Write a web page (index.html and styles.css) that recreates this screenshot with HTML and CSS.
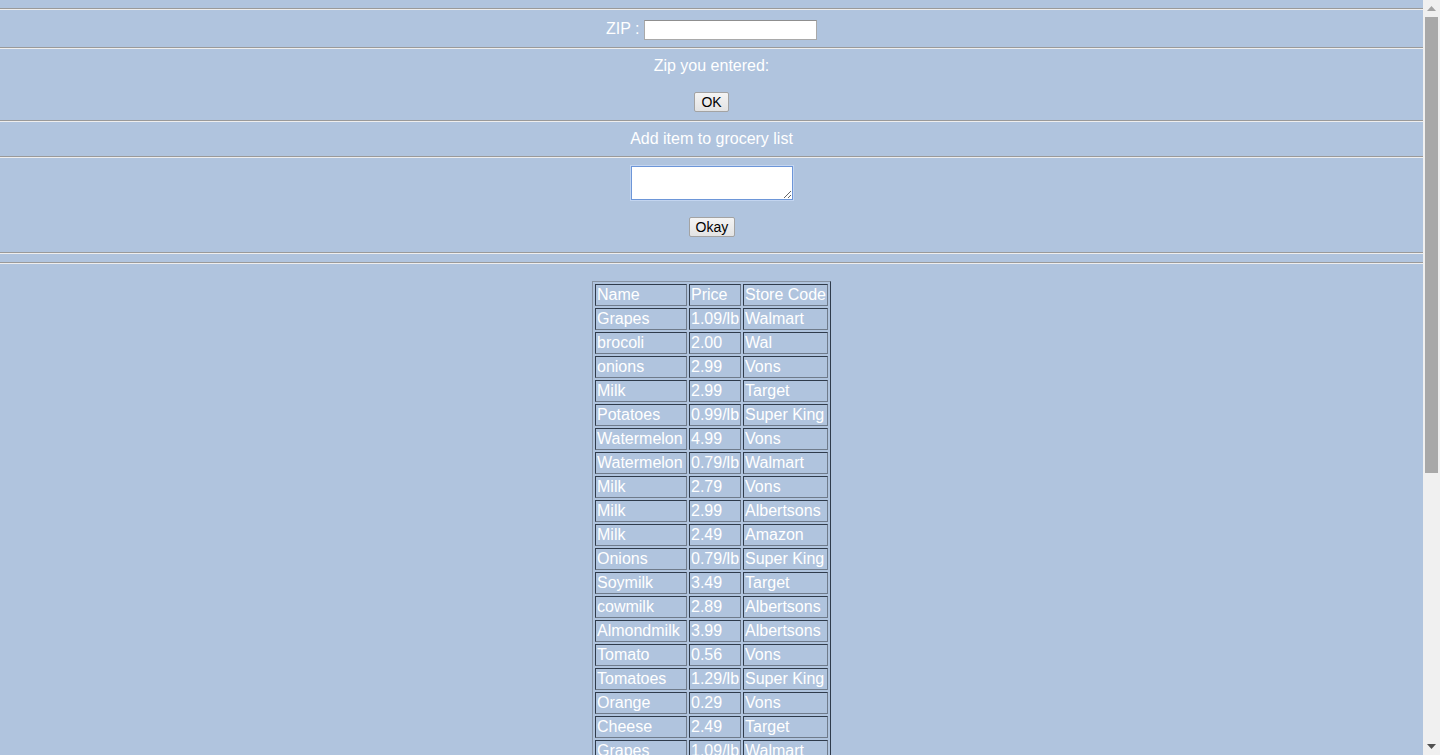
FILE: index.html
```html
<!DOCTYPE html>
<html>
<head>
<meta charset="utf-8">
<title>Grocery list</title>
<link rel="stylesheet" href="styles.css">
</head>
<body>
<div class="viewport">
  <div class="page">
    <hr class="rule">
    <div class="zip-row">ZIP : <input class="zip-input" type="text"></div>
    <hr class="rule">
    <div class="entered">
      <div class="label">Zip you entered:</div>
      <button class="btn btn-ok">OK</button>
    </div>
    <hr class="rule">
    <div class="add-title">Add item to grocery list</div>
    <hr class="rule">
    <div class="add-box">
      <textarea class="item-text"></textarea>
      <button class="btn btn-okay">Okay</button>
    </div>
    <hr class="rule">
    <div class="spacer"></div>
    <hr class="rule">
    <table class="grocery">
      <tr><td class="c-name">Name</td><td>Price</td><td>Store Code</td></tr>
      <tr><td>Grapes</td><td>1.09/lb</td><td>Walmart</td></tr>
      <tr><td>brocoli</td><td>2.00</td><td>Wal</td></tr>
      <tr><td>onions</td><td>2.99</td><td>Vons</td></tr>
      <tr><td>Milk</td><td>2.99</td><td>Target</td></tr>
      <tr><td>Potatoes</td><td>0.99/lb</td><td>Super King</td></tr>
      <tr><td>Watermelon</td><td>4.99</td><td>Vons</td></tr>
      <tr><td>Watermelon</td><td>0.79/lb</td><td>Walmart</td></tr>
      <tr><td>Milk</td><td>2.79</td><td>Vons</td></tr>
      <tr><td>Milk</td><td>2.99</td><td>Albertsons</td></tr>
      <tr><td>Milk</td><td>2.49</td><td>Amazon</td></tr>
      <tr><td>Onions</td><td>0.79/lb</td><td>Super King</td></tr>
      <tr><td>Soymilk</td><td>3.49</td><td>Target</td></tr>
      <tr><td>cowmilk</td><td>2.89</td><td>Albertsons</td></tr>
      <tr><td>Almondmilk</td><td>3.99</td><td>Albertsons</td></tr>
      <tr><td>Tomato</td><td>0.56</td><td>Vons</td></tr>
      <tr><td>Tomatoes</td><td>1.29/lb</td><td>Super King</td></tr>
      <tr><td>Orange</td><td>0.29</td><td>Vons</td></tr>
      <tr><td>Cheese</td><td>2.49</td><td>Target</td></tr>
      <tr><td>Grapes</td><td>1.09/lb</td><td>Walmart</td></tr>
    </table>
  </div>
  <div class="scrollbar">
    <div class="sb-arrow">
      <svg width="9" height="5" viewBox="0 0 9 5"><path d="M0 5 L4.5 0 L9 5 Z" fill="#a3a3a3"/></svg>
    </div>
    <div class="sb-track"><div class="sb-thumb"></div></div>
    <div class="sb-arrow">
      <svg width="9" height="5" viewBox="0 0 9 5"><path d="M0 0 L9 0 L4.5 5 Z" fill="#505050"/></svg>
    </div>
  </div>
</div>
</body>
</html>
```

FILE: styles.css
```css
html, body {
  margin: 0;
  padding: 0;
  height: 100%;
  overflow: hidden;
  background: #b0c4de;
}

body {
  font-family: "Liberation Sans", Arial, sans-serif;
  font-size: 16px;
  color: #ffffff;
}

.viewport {
  display: flex;
  height: 100vh;
}

.page {
  flex: 1;
  min-width: 0;
  overflow: hidden;
  padding-top: 8px;
  text-align: center;
}

.rule {
  margin: 0;
  height: 0;
  border: 0;
  border-top: 1px solid #9a9a9a;
  border-bottom: 1px solid #eeeeee;
}

.zip-row {
  padding: 8px 0;
  height: 21px;
  line-height: 21px;
}

.zip-input {
  box-sizing: border-box;
  width: 173px;
  height: 20px;
  margin: 0;
  padding: 1px 2px;
  border: 1px solid #a9a9a9;
  border-top-color: #8f8f8f;
  background: #ffffff;
  vertical-align: 0;
  font-family: "Liberation Sans", Arial, sans-serif;
  font-size: 13px;
}

.entered {
  padding: 8px 0;
  display: flex;
  flex-direction: column;
  align-items: center;
}

.label,
.add-title {
  line-height: 18px;
}

.add-title {
  padding: 8px 0;
}

.btn {
  box-sizing: border-box;
  height: 20px;
  margin: 17px 0 0;
  padding: 0 6px;
  border: 1px solid #a3a3a3;
  border-radius: 2px;
  background: linear-gradient(#f4f4f4, #e3e3e3);
  color: #000000;
  font-family: "Liberation Sans", Arial, sans-serif;
  font-size: 14px;
  line-height: 18px;
}

.btn-ok {
  width: 35px;
}

.btn-okay {
  width: 46px;
}

.add-box {
  padding: 8px 0 15px;
  display: flex;
  flex-direction: column;
  align-items: center;
}

.item-text {
  box-sizing: border-box;
  width: 162px;
  height: 34px;
  margin: 0;
  padding: 2px;
  border: 1px solid #6d96d8;
  box-shadow: 0 0 0 1px #c3d5f0;
  background: #ffffff;
  font-family: "Liberation Mono", monospace;
  font-size: 13px;
  resize: both;
  outline: none;
}

.spacer {
  height: 8px;
}

.grocery {
  margin: 17px auto 0;
  border-collapse: separate;
  border-spacing: 2px;
  border: 1px solid;
  border-color: #8793a3 #2f3b4b #2f3b4b #8793a3;
  text-align: left;
}

.grocery td {
  padding: 1px;
  line-height: 18px;
  border: 1px solid;
  border-color: #2f3b4b #6f7b8b #6f7b8b #2f3b4b;
  white-space: nowrap;
}

.grocery .c-name {
  width: 88px;
}

.scrollbar {
  width: 17px;
  flex: none;
  display: flex;
  flex-direction: column;
  background: #f0f0f0;
}

.sb-arrow {
  height: 17px;
  flex: none;
  display: flex;
  align-items: center;
  justify-content: center;
}

.sb-track {
  flex: 1;
  display: flex;
  flex-direction: column;
  align-items: center;
}

.sb-thumb {
  width: 13px;
  height: 456px;
  background: #a8a8a8;
}
```
